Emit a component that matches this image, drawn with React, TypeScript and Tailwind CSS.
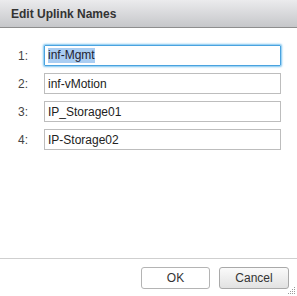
const rows = [
  { n: "1:", value: "inf-Mgmt", focused: true },
  { n: "2:", value: "inf-vMotion" },
  { n: "3:", value: "IP_Storage01" },
  { n: "4:", value: "IP-Storage02" },
]

const App = () => {
  return (
    <div className="flex h-[296px] w-[297px] flex-col bg-white font-['Liberation_Sans',Arial,sans-serif] text-[12px] text-[#333]">
      <div className="flex h-[28px] shrink-0 items-center border-b border-[#8e8e8e] bg-gradient-to-b from-[#ebebed] to-[#c6c7ca] pl-[11px] text-[12px] font-bold text-[#333]">
        Edit Uplink Names
      </div>

      <div className="flex flex-1 flex-col gap-[7px] pt-[17px]">
        {rows.map((row) => (
          <div key={row.n} className="flex items-center">
            <span className="w-[44px] shrink-0 pl-[18px] text-[#444]">{row.n}</span>
            <div
              className={
                row.focused
                  ? "flex h-[21px] w-[237px] items-center rounded-[1px] border border-[#4aa3df] pl-[3px] shadow-[0_0_2px_1px_#7cc4f0]"
                  : "flex h-[21px] w-[237px] items-center border border-[#bdbdbd] pl-[3px]"
              }
            >
              {row.focused ? (
                <span className="bg-[#a9cdf2] leading-[15px] text-[#223]">{row.value}</span>
              ) : (
                <span className="text-[#222]">{row.value}</span>
              )}
            </div>
          </div>
        ))}
      </div>

      <div className="relative flex h-[38px] shrink-0 justify-end gap-[9px] border-t border-[#cfcfcf] pr-[8px] pt-[8px]">
        <button className="h-[22px] w-[69px] rounded-[3px] border border-[#b4b4b4] bg-white text-[12px] text-[#333]">
          OK
        </button>
        <button className="h-[22px] w-[70px] rounded-[3px] border border-[#a9a9a9] bg-gradient-to-b from-[#fafafa] to-[#e2e2e2] text-[12px] text-[#333]">
          Cancel
        </button>
        <svg className="absolute bottom-[1px] right-[1px]" width="8" height="8" viewBox="0 0 8 8">
          {[
            [6, 0], [4, 2], [6, 2], [2, 4], [4, 4], [6, 4], [0, 6], [2, 6], [4, 6], [6, 6],
          ].map(([x, y]) => (
            <rect key={`${x}-${y}`} x={x} y={y} width="1" height="1" fill="#9a9a9a" />
          ))}
        </svg>
      </div>
    </div>
  )
}

export default App
